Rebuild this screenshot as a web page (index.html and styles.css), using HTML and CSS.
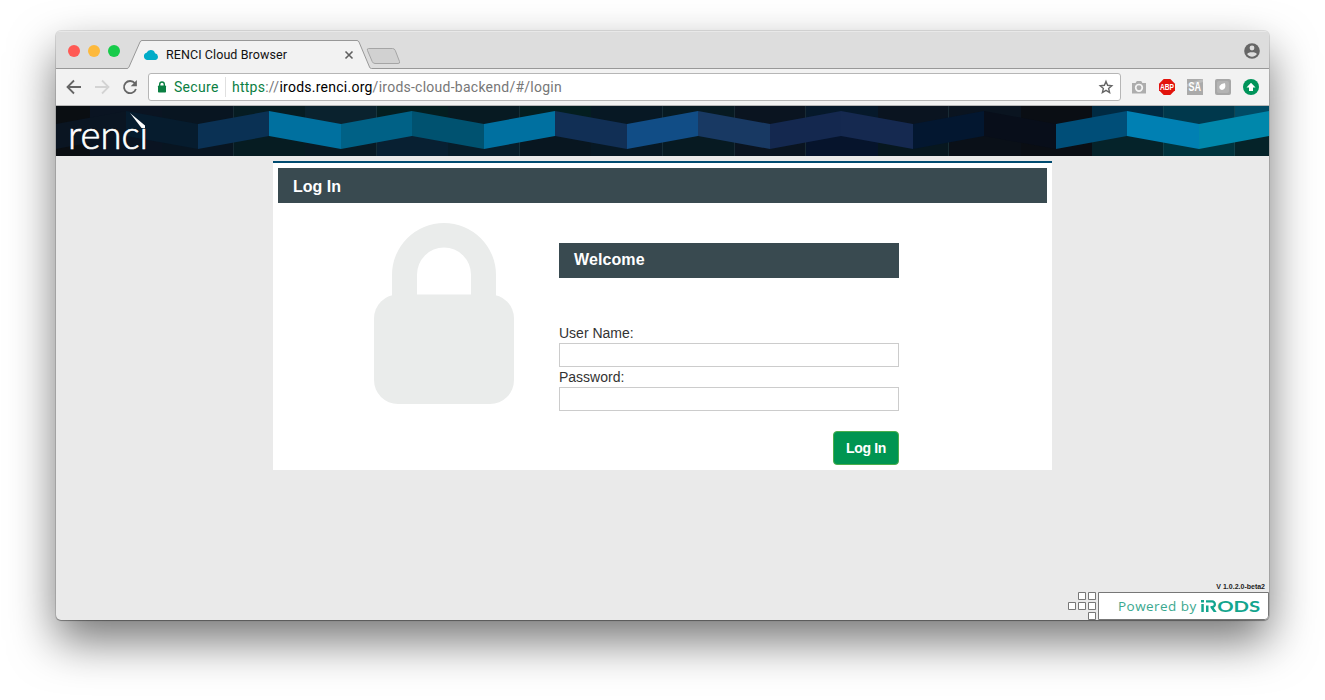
FILE: index.html
```html
<!DOCTYPE html>
<html lang="en">
<head>
<meta charset="utf-8">
<title>RENCI Cloud Browser</title>
<link rel="stylesheet" href="styles.css">
</head>
<body>
<div class="window">
  <header class="tabstrip">
    <svg class="tab-shape" width="1213" height="38" viewBox="0 0 1213 38">
      <path d="M0 37.500H71Q72.500 37.500 73 36L84 11Q84.700 9.500 86 9.500H301Q302.300 9.500 303 11L313.500 36Q314 37.500 315.500 37.500H1213V39H0Z" fill="#f2f2f2" stroke="#989898"/>
      <path d="M73 36.500h240v2H72z" fill="#f2f2f2"/>
      <path d="M312.500 17.500h24q2 0 2.800 2l4.200 11q.8 2-1.500 2h-23q-2 0-2.800-2l-4.700-11q-.8-2 1-2z" fill="#d1d1d1" stroke="#a5a5a5"/>
    </svg>
    <div class="lights"><i class="light red"></i><i class="light amber"></i><i class="light green"></i></div>
    <svg class="favicon" width="16" height="12" viewBox="0 0 16 12"><path d="M4 11a3.700 3.700 0 0 1-.4-7.200A4.500 4.500 0 0 1 12 4.200 3.500 3.500 0 0 1 12.500 11z" fill="#00acc8"/></svg>
    <span class="tab-title">RENCI Cloud Browser</span>
    <svg class="tab-close" width="8" height="8" viewBox="0 0 8 8"><path d="M.5.5l7 7M7.500.5l-7 7" stroke="#606060" stroke-width="1.600"/></svg>
    <svg class="profile" width="16" height="16" viewBox="0 0 16 16"><circle cx="8" cy="8" r="7.800" fill="#666"/><circle cx="8" cy="5" r="2.400" fill="#ddd"/><path d="M3.200 11.300C3.700 8.700 12.300 8.700 12.800 11.300 10.500 14.600 5.500 14.600 3.200 11.300z" fill="#ddd"/></svg>
  </header>
  <nav class="toolbar">
    <svg class="nav-icons" width="74" height="16" viewBox="0 0 74 16" fill="none" stroke-width="1.800">
      <path d="M15 8H2M8 1.500L1.500 8 8 14.500" stroke="#666"/>
      <path d="M29 8h13M36 1.500L42.500 8 36 14.500" stroke="#d3d3d3"/>
      <path d="M68.900 4.300A6.100 6.100 0 1 0 69.900 10" stroke="#666"/><path d="M70.900 1v6.200h-6.200z" fill="#666"/>
    </svg>
    <div class="address">
      <svg class="secure-lock" width="8" height="12" viewBox="0 0 8 12"><path d="M1.700 5V3.300a2.300 2.300 0 0 1 4.600 0V5" fill="none" stroke="#0b8043" stroke-width="1.400"/><rect y="4.500" width="8" height="7" rx=".8" fill="#0b8043"/></svg>
      <span class="secure">Secure</span>
      <span class="url"><b class="scheme">https</b>://<b class="host">irods.renci.org</b>/irods-cloud-backend/#/login</span>
      <svg class="star" width="16" height="16" viewBox="0 0 16 16"><path d="M8 2.400l1.600 3.900 4.200.4-3.200 2.800 1 4.100L8 11.400l-3.600 2.200 1-4.100-3.200-2.800 4.200-.4z" fill="none" stroke="#666" stroke-width="1.400"/></svg>
    </div>
    <div class="extensions">
      <svg width="16" height="16" viewBox="0 0 16 16"><path d="M1 4h3.600l1.200-2h4.400l1.200 2H15v10.500H1z" fill="#adadad"/><circle cx="8" cy="8.800" r="3.300" fill="none" stroke="#f5f5f5" stroke-width="1.700"/></svg>
      <svg width="16" height="16" viewBox="0 0 16 16"><path d="M4.700 0h6.600L16 4.700v6.600L11.300 16H4.700L0 11.300V4.700z" fill="#e2140d"/><text class="abp" x="8" y="11.200" textLength="14" lengthAdjust="spacingAndGlyphs">ABP</text></svg>
      <svg width="16" height="16" viewBox="0 0 16 16"><path d="M0 0h16v16H0z" fill="#aaa"/><path d="M0 5L16 0v3L0 8z" fill="#bcbcbc"/><text class="sa" x="7.800" y="12" textLength="12.500" lengthAdjust="spacingAndGlyphs">SA</text></svg>
      <svg width="16" height="16" viewBox="0 0 16 16"><rect width="16" height="16" rx="2" fill="#a7a7a7"/><rect x="2" y="2" width="12" height="12" rx="2" fill="#b4b4b4"/><path d="M10 4.200Q11.500 10 7 11 3.800 10.500 4.500 7 6.500 3.800 10 4.200z" fill="#fff"/></svg>
      <svg width="16" height="16" viewBox="0 0 16 16"><circle cx="8" cy="8" r="8" fill="#00945a"/><path d="M8 3.800l4.500 4.700H10v3.500H6V8.500H3.500z" fill="#fff"/></svg>
    </div>
  </nav>
  <svg class="banner" width="1213" height="50" viewBox="0 0 1213 50">
    <path fill="#0a0e12" d="M0 0h34v50H0z"/><path fill="#0a1422" d="M34 0h72v50H34z"/>
    <path fill="#081521" d="M106 0h72v50h-72z"/>
    <path fill="#061c22" d="M178 0h71v50h-71z"/>
    <path fill="#0a222e" d="M249 0h72v24h-72z"/><path fill="#081a24" d="M249 24h72v26h-72z"/>
    <path fill="#041e20" d="M321 0h71v24h-71z"/><path fill="#082032" d="M321 24h71v26h-71z"/>
    <path fill="#071a22" d="M392 0h72v24h-72z"/><path fill="#071d2a" d="M392 24h72v26h-72z"/>
    <path fill="#041e20" d="M464 0h71v24h-71z"/><path fill="#081620" d="M464 24h71v26h-71z"/>
    <path fill="#071824" d="M535 0h72v50h-72z"/>
    <path fill="#071a22" d="M607 0h71v50h-71z"/>
    <path fill="#0a1420" d="M678 0h72v50h-72z"/>
    <path fill="#06192b" d="M750 0h72v24h-72z"/><path fill="#06142c" d="M750 24h72v26h-72z"/>
    <path fill="#0a1420" d="M822 0h71v24h-71z"/><path fill="#07171f" d="M822 24h71v26h-71z"/>
    <path fill="#0a1420" d="M893 0h72v24h-72z"/><path fill="#0a1018" d="M893 24h72v26h-72z"/>
    <path fill="#0a0e14" d="M965 0h71v50h-71z"/>
    <path fill="#002a42" d="M1036 0h71v24h-71z"/><path fill="#05232a" d="M1036 24h71v26h-71z"/>
    <path fill="#00384c" d="M1107 0h72v24h-72z"/><path fill="#00333d" d="M1107 24h72v26h-72z"/>
    <path fill="#004b65" d="M1179 0h34v24h-34z"/><path fill="#052329" d="M1179 24h34v26h-34z"/>
    <path class="seam" d="M177.500 0v50M320.500 0v50M463.500 0v50M606.500 0v50M678.500 0v50M749.500 0v50M892.500 0v50M1107.500 0v50M1178.500 0v50"/>
    <path fill="#0a1522" d="M0 18L70 5v25L0 43z"/>
    <path fill="#061c2e" d="M70 5l72 13v25L70 30z"/>
    <path fill="#0a3154" d="M142 18l71-13v25l-71 13z"/>
    <path fill="#00709f" d="M213 5l72 13v25l-72-13z"/>
    <path fill="#006186" d="M285 18l71-13v25l-71 13z"/>
    <path fill="#005270" d="M356 5l72 13v25l-72-13z"/>
    <path fill="#0070a0" d="M428 18l71-13v25l-71 13z"/>
    <path fill="#112f55" d="M499 5l72 13v25l-72-13z"/>
    <path fill="#114d86" d="M571 18l71-13v25l-71 13z"/>
    <path fill="#183963" d="M642 5l72 13v25l-72-13z"/>
    <path fill="#14284f" d="M714 18l71-13v25l-71 13z"/>
    <path fill="#152950" d="M785 5l72 13v25l-72-13z"/>
    <path fill="#031730" d="M857 18l71-13v25l-71 13z"/>
    <path fill="#080e1a" d="M928 5l72 13v25l-72-13z"/>
    <path fill="#004e78" d="M1000 18l71-13v25l-71 13z"/>
    <path fill="#0080b3" d="M1071 5l72 13v25l-72-13z"/>
    <path fill="#0087ab" d="M1143 18l70-13v25l-70 13z"/>
    <text class="renci" x="12" y="42.700" textLength="80" lengthAdjust="spacingAndGlyphs">rencı</text>
    <path d="M74 7L89 19.500V22H85.500z" fill="#fff"/>
  </svg>
  <main class="page">
    <section class="panel">
      <h1 class="bar">Log In</h1>
      <div class="content">
        <svg class="lock" width="140" height="182" viewBox="0 0 140 182" fill="#eaeceb">
          <path fill-rule="evenodd" d="M18 80V52a52 52 0 0 1 104 0v28zM43 72h54V51.500a27 27 0 0 0-54 0z"/>
          <rect y="71.500" width="140" height="109.500" rx="24"/>
        </svg>
        <form class="form">
          <h2 class="bar welcome">Welcome</h2>
          <label class="field">User Name:<input type="text"></label>
          <label class="field">Password:<input type="password"></label>
          <button class="login" type="button">Log In</button>
        </form>
      </div>
    </section>
    <footer class="footer">
      <span class="version">V 1.0.2.0-beta2</span>
      <div class="powered">
        <svg class="squares" width="30" height="28" viewBox="0 0 30 28" fill="#fff" stroke="#777"><path d="M10.500.5h7v7h-7zM20.500.5h7v7h-7zM.5 10.500h7v7h-7zM10.500 10.500h7v7h-7zM20.500 10.500h7v7h-7zM20.500 20.500h7v7h-7z"/></svg>
        <div class="badge">
          <span class="powered-text">Powered by</span>
          <svg class="irods" width="60" height="14" viewBox="0 0 60 14">
            <path d="M0 1h3v2.500H0zM.3 5h2.500v8H.3z"/>
            <path d="M5 1.200h6.200a4 4 0 0 1 1.500 7.600l3 4.200h-3L9.500 8.700V7H11a1.700 1.700 0 0 0 0-3.500H5zM5 6.500h2.500V13H5z"/>
            <text x="16.200" y="12.900" textLength="43" lengthAdjust="spacingAndGlyphs">ODS</text>
          </svg>
        </div>
      </div>
    </footer>
  </main>
</div>
</body>
</html>
```
FILE: styles.css
```css
* { box-sizing: border-box; }
body { margin: 0; height: 700px; overflow: hidden; background: #fff; padding: 31px 56px 80px; font-family: "Liberation Sans", Arial, sans-serif; }
.window { display: flex; flex-direction: column; width: 1213px; height: 589px; border-radius: 5px; overflow: hidden; background: #eaeaea; box-shadow: 0 1px 1px 0 rgba(0,0,0,.3), 0 0 0 1px rgba(0,0,0,.1), 0 21px 46px rgba(0,0,0,.54); }
svg { overflow: visible; }

.tabstrip { position: relative; display: flex; align-items: center; height: 38px; flex: none; background: #ddd; padding: 2px 9px 0 12px; box-shadow: inset 0 1px #e8e8e8; }
.tab-shape { position: absolute; left: 0; top: 0; overflow: hidden; }
.lights { position: relative; display: flex; gap: 8px; margin-right: 23px; }
.light { width: 12px; height: 12px; border-radius: 50%; }
.red { background: #ff5a55; }
.amber { background: #fdb93c; }
.green { background: #17cb4a; }
.favicon, .tab-title, .tab-close, .profile { position: relative; }
.favicon { margin-top: 7px; }
.tab-title { margin: 8px 0 0 7px; width: 122px; font: 12.500px/16px Roboto, sans-serif; letter-spacing: .08px; white-space: nowrap; color: #111; }
.tab-close { margin: 8px 0 0 57px; }
.profile { margin-left: auto; }

.toolbar { display: flex; align-items: center; height: 37px; flex: none; background: #f2f2f2; border-bottom: 1px solid #b7b7b7; padding: 0 10px; }
.nav-icons { margin-right: 8px; }
.address { display: flex; align-items: center; width: 973px; height: 28px; background: #fff; border: 1px solid #b6b6b6; border-radius: 3px; padding: 0 6px 0 9px; font: 14px/20px Roboto, sans-serif; }
.secure { color: #0b8043; margin-left: 8px; width: 52px; height: 20px; border-right: 1px solid #e0e0e0; letter-spacing: .3px; }
.url { color: #777; margin-left: 6px; letter-spacing: .25px; }
.url b { font-weight: 400; }
.url .scheme { color: #0b8043; }
.url .host { color: #000; }
.star { margin-left: auto; }
.extensions { display: flex; gap: 12px; margin-left: 10px; }
.abp, .sa { fill: #fff; text-anchor: middle; font-family: "Liberation Sans", sans-serif; font-weight: 700; }
.abp { font-size: 9px; }
.sa { font-size: 12px; }

.banner { display: block; flex: none; overflow: hidden; background: #0a1018; }
.seam { stroke: #3c6468; stroke-opacity: .28; }
.renci { fill: #fff; stroke: #fff; stroke-width: .7px; font: 300 39px Lato, sans-serif; }

.page { flex: 1; display: flex; flex-direction: column; align-items: center; padding-top: 5px; }
.panel { width: 779px; height: 309px; background: #fff; border-top: 2px solid #004b70; padding: 5px; }
.bar { margin: 0; height: 35px; background: #394a50; color: #fff; font-size: 16px; line-height: 37px; font-weight: 700; padding-left: 15px; letter-spacing: 0; }
.content { display: flex; padding-left: 96px; }
.lock { margin-top: 20px; }
.form { margin: 40px 0 0 45px; width: 340px; display: flex; flex-direction: column; }
.welcome { line-height: 33px; margin-bottom: 45px; letter-spacing: .1px; }
.field { font-size: 14px; line-height: 20px; height: 44px; color: #333; }
.field input { display: block; width: 100%; height: 24px; margin: 0; border: 1px solid #ccc; border-radius: 0; background: #fff; }
.login { align-self: flex-end; width: 66px; height: 34px; margin-top: 20px; padding: 0; border: 1px solid #4cae4c; border-radius: 4px; background: #009551; color: #fff; font: 700 14px "Liberation Sans", sans-serif; letter-spacing: -.35px; }

.footer { align-self: stretch; margin-top: auto; display: flex; flex-direction: column; align-items: flex-end; }
.version { font-size: 7px; line-height: 10px; font-weight: 700; color: #222; margin: 0 4px 0 0; }
.powered { display: flex; }
.badge { display: flex; align-items: center; width: 171px; height: 28px; background: #fff; border: 1px solid #777; border-radius: 0 0 4px 0; padding: 0 0 1px 19px; }
.powered-text { color: #3aa88f; width: 79px; font: 13.500px/20px "Open Sans", sans-serif; letter-spacing: .45px; white-space: nowrap; margin-right: 4px; }
.irods { fill: #13a58e; }
.irods text { font: 700 16px Lato, sans-serif; }
```
